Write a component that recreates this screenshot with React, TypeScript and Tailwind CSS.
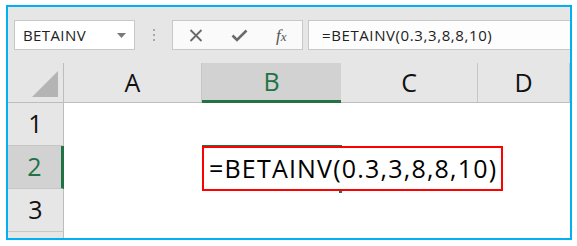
import React from 'react';

const cols = [
    { name: 'A', w: 'w-[138px]', active: false },
    { name: 'B', w: 'w-[139px]', active: true },
    { name: 'C', w: 'w-[137px]', active: false },
    { name: 'D', w: 'flex-1', active: false },
];

const rows = [1, 2, 3];

const App: React.FC = () => {
    return (
        <div className="w-[577px] h-[246px] bg-white pt-[5px] pl-[6px] overflow-hidden" style={{ fontFamily: '"Open Sans", "Noto Sans", sans-serif' }}>
            <div className="w-[566px] h-[235px] border-2 border-[#00b0f0] bg-[#e6e6e6] flex flex-col overflow-hidden">
                {/* formula bar */}
                <div className="h-[56px] flex items-start pt-[13px] pl-[6px] shrink-0">
                    <div className="w-[121px] h-[30px] bg-white border border-[#c8c8c8] flex items-center pl-[8px] pr-[8px]">
                        <span className="text-[15px] tracking-[0.4px] text-[#222] flex-1">BETAINV</span>
                        <svg width="9" height="5" viewBox="0 0 9 5"><path d="M0 0h9L4.5 5z" fill="#7a7a7a" /></svg>
                    </div>
                    <div className="w-[37px] h-[30px] flex flex-col items-center justify-center gap-[3px]">
                        <span className="w-[2px] h-[2px] bg-[#a8a8a8]" />
                        <span className="w-[2px] h-[2px] bg-[#a8a8a8]" />
                        <span className="w-[2px] h-[2px] bg-[#a8a8a8]" />
                    </div>
                    <div className="w-[131px] h-[30px] bg-[#fafafa] border border-[#c8c8c8] flex items-center pl-[16px]">
                        <svg width="14" height="13" viewBox="0 0 14 13"><path d="M1.5 1l11 11M12.5 1l-11 11" stroke="#6a6a6a" strokeWidth="1.8" /></svg>
                        <svg className="ml-[28px]" width="17" height="13" viewBox="0 0 17 13"><path d="M1.5 6.5l4.5 4.5L15.5 1.5" stroke="#6a6a6a" strokeWidth="2.6" fill="none" /></svg>
                        <span className="ml-[28px] text-[17px] leading-none text-[#555] italic" style={{ fontFamily: '"Liberation Serif", serif' }}>f<span className="text-[13px]">x</span></span>
                    </div>
                    <div className="ml-[5px] flex-1 h-[30px] bg-[#fdfdfd] border-y border-l border-[#c8c8c8] flex items-center pl-[13px]">
                        <span className="text-[15px] tracking-[0.6px] text-[#222]">=BETAINV(0.3,3,8,8,10)</span>
                    </div>
                </div>
                {/* column headers */}
                <div className="h-[40px] flex shrink-0 border-b border-[#bdbdbd]">
                    <div className="w-[56px] border-r border-[#bdbdbd] flex items-end justify-end pr-[5px] pb-[5px]">
                        <svg width="26" height="26" viewBox="0 0 26 26"><path d="M26 0v26H0z" fill="#b4b4b4" /></svg>
                    </div>
                    {cols.map(c => (
                        <div
                            key={c.name}
                            className={`${c.w} flex items-center justify-center text-[25px] ${c.active ? 'bg-[#d2d2d2] text-[#217346] border-b-[3px] border-b-[#217346] -mb-px' : 'text-[#111] border-r border-[#c6c6c6]'}`}
                        >
                            {c.name}
                        </div>
                    ))}
                </div>
                {/* rows */}
                {rows.map(r => (
                    <div key={r} className="h-[43px] flex shrink-0">
                        <div className={`w-[56px] flex items-center justify-center text-[25px] border-b border-[#c6c6c6] ${r === 2 ? 'bg-[#d2d2d2] text-[#217346] border-r-[3px] border-r-[#217346]' : 'bg-[#e6e6e6] text-[#111] border-r border-r-[#bdbdbd]'}`}>
                            {r}
                        </div>
                        <div className="flex-1 bg-white flex">
                            <div className="w-[138px]" />
                            <div className="w-[139px] relative">
                                {r === 2 && (
                                    <>
                                        <div className="absolute left-0 -top-px w-[140px] h-[46px] border-t border-[#217346]" />
                                        <div className="absolute left-[136px] top-[43px] w-[5px] h-[5px] bg-[#217346] border border-white" />
                                        <div className="absolute left-0 top-0 w-[301px] h-[45px] border-2 border-[#ff0000] bg-white flex items-center pl-[5px] z-10">
                                            <span className="text-[25px] tracking-[1.2px] text-black whitespace-nowrap">=BETAINV(0.3,3,8,8,10)</span>
                                        </div>
                                    </>
                                )}
                            </div>
                        </div>
                    </div>
                ))}
                <div className="flex flex-1">
                    <div className="w-[56px] bg-[#e6e6e6] border-r border-[#bdbdbd]" />
                    <div className="flex-1 bg-white" />
                </div>
            </div>
        </div>
    );
};

export default App;
